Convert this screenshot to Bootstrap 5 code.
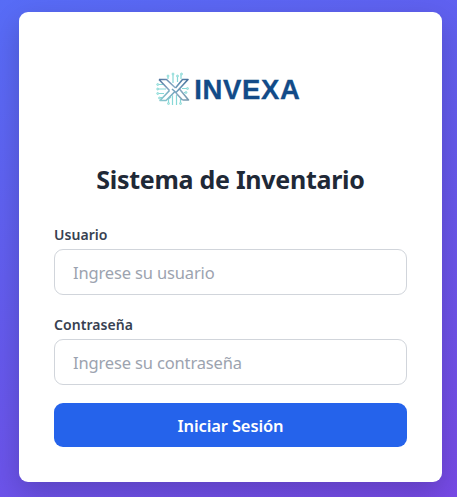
<!DOCTYPE html>
<html lang="es">
<head>
<meta charset="utf-8">
<meta name="viewport" content="width=device-width, initial-scale=1">
<title>Sistema de Inventario</title>
<link href="https://cdn.jsdelivr.net/npm/bootstrap@5.3.0/dist/css/bootstrap.min.css" rel="stylesheet">
<style>
body{font-family:"Segoe UI","Noto Sans","Open Sans",sans-serif;background:linear-gradient(155deg,#576cf6 0%,#6559ec 50%,#774ae6 100%);height:497px;padding:12px 15px 15px 19px;overflow:hidden}
.login-card{width:423px;height:470px;border-radius:9px;padding:35px;box-shadow:0 10px 28px rgba(0,0,0,.18)}
.brand{height:117px;padding:22px 5px 0 0}
.login-title{font-size:25px;line-height:34px;font-weight:700;letter-spacing:-.28px;color:#1f2937;height:62px;margin:-1px 0 1px}
.form-label{font-size:14px;line-height:20px;font-weight:600;letter-spacing:.05px;color:#374151;height:25px;margin:0;padding-top:1px}
.login-input{height:46px;border:1px solid #d1d5db;border-radius:9px;padding:0 18px;font-size:16.5px;letter-spacing:-.15px;color:#1f2937}
.login-input::placeholder{color:#9ca3af;opacity:1}
.field-user,.field-pass{display:flex;flex-direction:column}
.field-user{margin-bottom:19px}
.field-pass{margin-bottom:18px}
.btn-login{height:44px;border-radius:9px;background:#2563eb;border:0;color:#fff;font-size:16.5px;font-weight:600;letter-spacing:-.13px;padding:1px 0 0;line-height:44px}
</style>
<script src="https://cdn.jsdelivr.net/npm/bootstrap@5.3.0/dist/js/bootstrap.bundle.min.js"></script>
</head>
<body>
<main class="card login-card border-0 bg-white">
  <div class="brand d-flex justify-content-center">
    <svg width="148" height="40" viewBox="154 69 148 40" role="img" aria-label="INVEXA">
      <defs><linearGradient id="steel" gradientUnits="userSpaceOnUse" x1="159" y1="76" x2="188" y2="101"><stop offset="0" stop-color="#4a6e9b"/><stop offset=".5" stop-color="#8fb0c8"/><stop offset="1" stop-color="#7397ad"/></linearGradient>
      <linearGradient id="arm" gradientUnits="userSpaceOnUse" x1="189" y1="74" x2="160" y2="101"><stop offset="0" stop-color="#3c6292"/><stop offset=".5" stop-color="#6f9dba"/><stop offset="1" stop-color="#8ccbd0"/></linearGradient></defs>
      <g fill="none" stroke="#86d8d6" stroke-width="1.2">
        <path d="M168 77V79M173 74.500V83M177.500 76V82M181 74.500V79"/>
        <path d="M158.500 84.500H163M158.500 89H166M158.500 93.500H164M160 97.500H162"/>
        <path d="M182 88.500H187M184 92.500H185M168.500 103V99L171 97M172.500 105V95M176.500 105V95M180.500 103V99"/>
        <g fill="#b9e8e6" stroke-width=".8"><circle cx="168" cy="76" r="1"/><circle cx="173" cy="74" r="1"/><circle cx="177.500" cy="76" r="1"/><circle cx="181.500" cy="74" r="1"/><circle cx="157.700" cy="84.500" r="1"/><circle cx="157.700" cy="89" r="1"/><circle cx="157.700" cy="93.500" r="1"/><circle cx="159.500" cy="98" r="1"/><circle cx="187.500" cy="88.500" r="1"/><circle cx="186" cy="92.500" r="1"/><circle cx="168.500" cy="103.500" r="1"/><circle cx="180.500" cy="103.500" r="1"/></g>
      </g>
      <path d="M159 79.500H166.500L175 88L182.500 79.500H188L179.500 89L188.500 100H182.500L175.500 93L166 100.500H160L169.500 90.500Z" fill="#fff"/>
      <path d="M182.500 100H188.500L179.500 89M182.500 100L176 93M159 79.500H166.500L175.500 88M159 79.500L169.500 90.500" fill="none" stroke="url(#steel)" stroke-width="1.600" stroke-linejoin="round"/>
      <path d="M175.500 88L182.500 79.500H188L176 92.500L172 89M169.500 90.500L160 100.500H166L174.500 92" fill="none" stroke="url(#arm)" stroke-width="1.600" stroke-linejoin="round"/>
      <text x="194.300" y="98.500" textLength="105.500" lengthAdjust="spacing" font-family="'Liberation Sans',sans-serif" font-size="27.500" font-weight="700" fill="#124b88" stroke="#124b88" stroke-width=".3">INVEXA</text>
    </svg>
  </div>
  <h1 class="login-title text-center">Sistema de Inventario</h1>
  <form onsubmit="return false">
    <div class="field-user"><label class="form-label" for="u">Usuario</label><input id="u" class="form-control login-input" placeholder="Ingrese su usuario"></div>
    <div class="field-pass"><label class="form-label" for="p">Contraseña</label><input id="p" type="password" class="form-control login-input" placeholder="Ingrese su contraseña"></div>
    <button class="btn btn-login w-100 d-block">Iniciar Sesión</button>
  </form>
</main>
</body>
</html>
